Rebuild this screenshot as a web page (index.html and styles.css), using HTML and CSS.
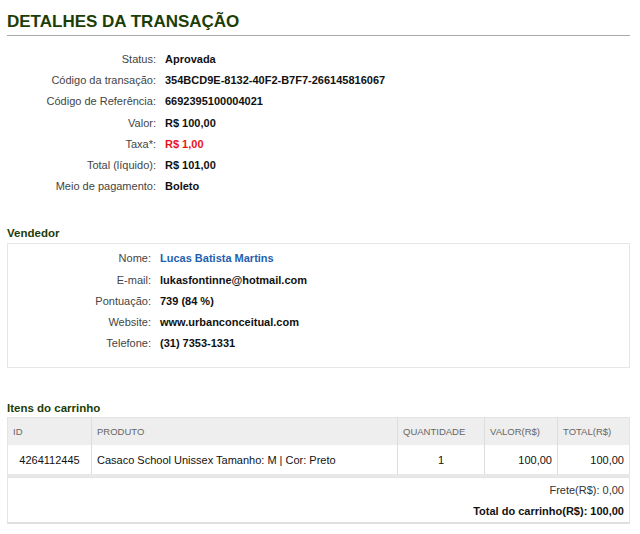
FILE: index.html
```html
<!DOCTYPE html>
<html lang="pt">
<head>
    <meta charset="UTF-8">
    <title>Detalhes da transação</title>
    <link rel="stylesheet" href="styles.css">
</head>
<body>
    <div class="page">
        <h1 class="title">DETALHES DA TRANSAÇÃO</h1>

        <dl class="info main">
            <dt>Status:</dt><dd>Aprovada</dd>
            <dt>Código da transação:</dt><dd>354BCD9E-8132-40F2-B7F7-266145816067</dd>
            <dt>Código de Referência:</dt><dd>6692395100004021</dd>
            <dt>Valor:</dt><dd>R$ 100,00</dd>
            <dt>Taxa*:</dt><dd class="red">R$ 1,00</dd>
            <dt>Total (líquido):</dt><dd>R$ 101,00</dd>
            <dt>Meio de pagamento:</dt><dd>Boleto</dd>
        </dl>

        <h2 class="sub">Vendedor</h2>
        <div class="box">
            <dl class="info seller">
                <dt>Nome:</dt><dd class="blue">Lucas Batista Martins</dd>
                <dt>E-mail:</dt><dd>lukasfontinne@hotmail.com</dd>
                <dt>Pontuação:</dt><dd>739 (84 %)</dd>
                <dt>Website:</dt><dd>www.urbanconceitual.com</dd>
                <dt>Telefone:</dt><dd>(31) 7353-1331</dd>
            </dl>
        </div>

        <h2 class="sub cart-title">Itens do carrinho</h2>
        <table class="cart">
            <thead>
                <tr>
                    <th class="c-id">ID</th>
                    <th class="c-prod">PRODUTO</th>
                    <th class="c-qtd">QUANTIDADE</th>
                    <th class="c-val">VALOR(R$)</th>
                    <th class="c-tot">TOTAL(R$)</th>
                </tr>
            </thead>
            <tbody>
                <tr>
                    <td class="center">4264112445</td>
                    <td>Casaco School Unissex Tamanho: M | Cor: Preto</td>
                    <td class="center">1</td>
                    <td class="right">100,00</td>
                    <td class="right">100,00</td>
                </tr>
            </tbody>
        </table>
        <div class="totals">
            <p>Frete(R$): 0,00</p>
            <p class="strong">Total do carrinho(R$): 100,00</p>
        </div>
    </div>
</body>
</html>
```

FILE: styles.css
```css
*{margin: 0;padding: 0;}
body{
    background: #ffffff;
    font-family: "Liberation Sans", Arial, sans-serif;
    font-size: 11px;
    color: #111111;
}
.page{
    width: 623px;
    padding: 11px 0 0 7px;
}
.title{
    font-size: 17px;
    font-weight: bold;
    color: #1c3d05;
    line-height: 21px;
    padding-bottom: 3px;
    border-bottom: 1px solid #a9a9a9;
}
.info{
    display: grid;
    grid-template-columns: 149px 1fr;
    column-gap: 9px;
    row-gap: 0;
}
.info dt{
    text-align: right;
    color: #444444;
    line-height: 21.2px;
}
.info dd{
    font-weight: bold;
    color: #111111;
    line-height: 21.2px;
}
.main{
    margin-top: 13px;
}
.red{
    color: #e8141b !important;
}
.blue{
    color: #1f5fae !important;
}
.sub{
    font-size: 11.5px;
    font-weight: bold;
    color: #1c3d05;
    line-height: 15px;
    margin-top: 29px;
}
.box{
    margin-top: 2px;
    border: 1px solid #e6e6e6;
    padding: 4px 0 13px 0;
}
.seller{
    grid-template-columns: 143px 1fr;
}
.cart-title{
    margin-top: 33px;
}
.cart{
    margin-top: 1px;
    width: 100%;
    border-collapse: collapse;
    border: 1px solid #e4e4e4;
}
.cart th{
    background: #eeeeee;
    color: #666666;
    font-weight: normal;
    font-size: 9.5px;
    text-align: left;
    height: 27px;
    padding: 0 5px;
    border-left: 1px solid #dddddd;
}
.cart td{
    height: 29px;
    padding: 0 5px;
    border-left: 1px solid #dddddd;
    border-bottom: 3px solid #e8e8e8;
}
.cart th:first-child,.cart td:first-child{
    border-left: none;
}
.c-id{width: 73px;}
.c-qtd{width: 76px;}
.c-val{width: 62px;}
.c-tot{width: 61px;}
.center{
    text-align: center;
}
.right{
    text-align: right;
}
.totals{
    border: 1px solid #e4e4e4;
    border-bottom: 2px solid #e0e0e0;
    text-align: right;
    padding: 2px 5px 0 0;
}
.totals p{
    line-height: 21px;
    color: #333333;
}
.totals .strong{
    font-weight: bold;
    color: #111111;
}
```
